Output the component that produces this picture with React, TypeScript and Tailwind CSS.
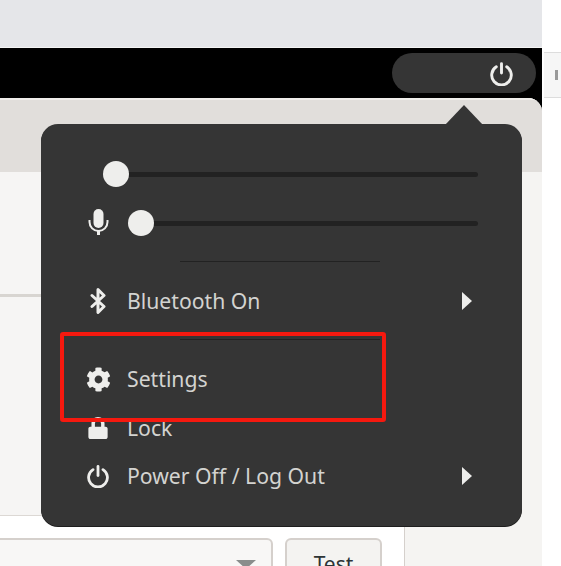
import type { ReactNode } from "react";
import { FaCog, FaLock } from "react-icons/fa";

function PowerGlyph({ size = 24 }: { size?: number }) {
  return (
    <svg width={size} height={size} viewBox="0 0 24 24" fill="none" stroke="currentColor" strokeWidth="2.8" strokeLinecap="round">
      <path d="M12 2.5v9" />
      <path d="M7 5.6a9.4 9.4 0 1 0 10 0" />
    </svg>
  );
}

function MicGlyph() {
  return (
    <svg width="21" height="27" viewBox="0 0 21 27" className="absolute left-[47px] top-[-2px] text-[#eeeeec]" fill="none" stroke="currentColor">
      <rect x="5.5" y="1" width="10" height="19" rx="5" fill="currentColor" stroke="none" />
      <path d="M1.5 12v2a9 9 0 0 0 18 0v-2" strokeWidth="2" />
      <path d="M10.5 23v4" strokeWidth="3" />
    </svg>
  );
}

function BluetoothGlyph() {
  return (
    <svg width="16" height="26" viewBox="0 0 16 26" fill="none" stroke="currentColor" strokeWidth="3" strokeLinejoin="round" strokeLinecap="round">
      <path d="M2 7.5 14 18.5 8 24.5V1.5L14 7.5 2 18.5" />
    </svg>
  );
}

function Slider({ first, icon }: { first?: boolean; icon?: ReactNode }) {
  return (
    <div className="relative h-[26px]">
      {icon}
      <div className={`absolute top-[11px] right-[44px] h-[5px] rounded-full bg-[#222222] ${first ? "left-[75px]" : "left-[100px]"}`} />
      <div className={`absolute top-0 h-[26px] w-[26px] rounded-full bg-[#eeeeec] ${first ? "left-[62px]" : "left-[87px]"}`} />
    </div>
  );
}

function Row({ icon, label, arrow }: { icon: ReactNode; label: string; arrow?: boolean }) {
  return (
    <div className="flex h-[32px] items-center">
      <div className="flex w-[28px] justify-center text-[#eeeeec]">{icon}</div>
      <span className="ml-[15px] text-[21.2px] leading-[32px] text-[#d3d3d0]">{label}</span>
      {arrow && <div className="ml-auto mr-[50px] h-0 w-0 border-y-[9px] border-l-[10px] border-y-transparent border-l-[#eeeeec]" />}
    </div>
  );
}

export default function App() {
  return (
    <div className="relative flex h-[566px] w-[561px] overflow-hidden bg-white font-['Noto_Sans',sans-serif]">
      <div className="flex w-[542px] shrink-0 flex-col">
        <div className="h-[47px] shrink-0 bg-[#e5e6e9]" />
        <div className="h-px shrink-0 bg-[#f5f5f5]" />
        <div className="flex h-[50px] shrink-0 items-center justify-end bg-black pr-[6px]">
          <div className="flex h-[40px] w-[144px] items-center justify-end rounded-full bg-[#353535] pr-[22px] text-[#eeeeec]">
            <PowerGlyph size={25} />
          </div>
        </div>
        <div className="min-h-0 flex-1 bg-black">
          <div className="flex h-full flex-col overflow-hidden rounded-tr-[14px] bg-white">
            <div className="h-[74px] shrink-0 border-t-2 border-[#f0eeeb] bg-[#e1dedb]" />
            <div className="flex min-h-0 flex-1">
              <div className="flex w-[404px] shrink-0 flex-col">
                <div className="h-[125px] shrink-0 border-b-[3px] border-[#d8d5d1] bg-[#f6f5f4]" />
                <div className="h-[218px] shrink-0 bg-[#f6f5f4]" />
                <div className="h-[23px] shrink-0 border-t border-[#dcd8d4] bg-white" />
                <div className="flex min-h-0 flex-1 items-start gap-[12px] overflow-hidden bg-white">
                  <div className="ml-[-10px] flex h-[60px] w-[283px] shrink-0 justify-end rounded-md border-2 border-[#d5d0cc] bg-[#f8f7f6] pr-[15px] pt-[20px]">
                    <div className="h-0 w-0 border-x-[10px] border-t-[9px] border-x-transparent border-t-[#8a8d8c]" />
                  </div>
                  <div className="flex h-[60px] w-[97px] shrink-0 justify-center rounded-md border-2 border-[#d5d0cc] bg-[#f4f3f1] text-[21px] leading-[48px] text-[#2e3436]">Test</div>
                </div>
              </div>
              <div className="flex-1 border-l border-[#d5d0cc] bg-[#f5f4f2]" />
            </div>
          </div>
        </div>
      </div>
      <div className="mt-[52px] ml-[2px] flex h-[46px] flex-1 items-center justify-end border-y border-[#dddddd] bg-[#f6f6f6] pr-[3px]">
        <div className="h-[10px] w-[3px] bg-[#999999]" />
      </div>

      <div className="absolute left-[445px] top-[105px] h-[20px] w-[38px] bg-[#353535] [clip-path:polygon(50%_0,100%_100%,0_100%)]" />
      <div className="absolute left-[41px] top-[124px] h-[402px] w-[481px] rounded-[17px] bg-[#353535] pt-[37px] shadow-[0_1px_0_#1e1e1e]">
        <div className="flex flex-col gap-[23px]">
          <Slider first />
          <Slider icon={<MicGlyph />} />
        </div>
        <div className="ml-[139px] mt-[25px] h-px w-[200px] bg-[#222222]" />
        <div className="ml-[43px] mt-[23px]">
          <Row icon={<BluetoothGlyph />} label="Bluetooth On" arrow />
        </div>
        <div className="ml-[139px] mt-[22px] h-px w-[200px] bg-[#222222]" />
        <div className="ml-[43px] mt-[23px] flex flex-col gap-[16px]">
          <Row icon={<FaCog size={25} />} label="Settings" />
          <div className="mt-px">
            <Row icon={<FaLock size={22} />} label="Lock" />
          </div>
          <Row icon={<PowerGlyph size={24} />} label="Power Off / Log Out" arrow />
        </div>
      </div>
      <div className="absolute left-[60px] top-[332px] h-[90px] w-[326px] rounded-[3px] border-[4px] border-[#f5190f]" />
    </div>
  );
}
